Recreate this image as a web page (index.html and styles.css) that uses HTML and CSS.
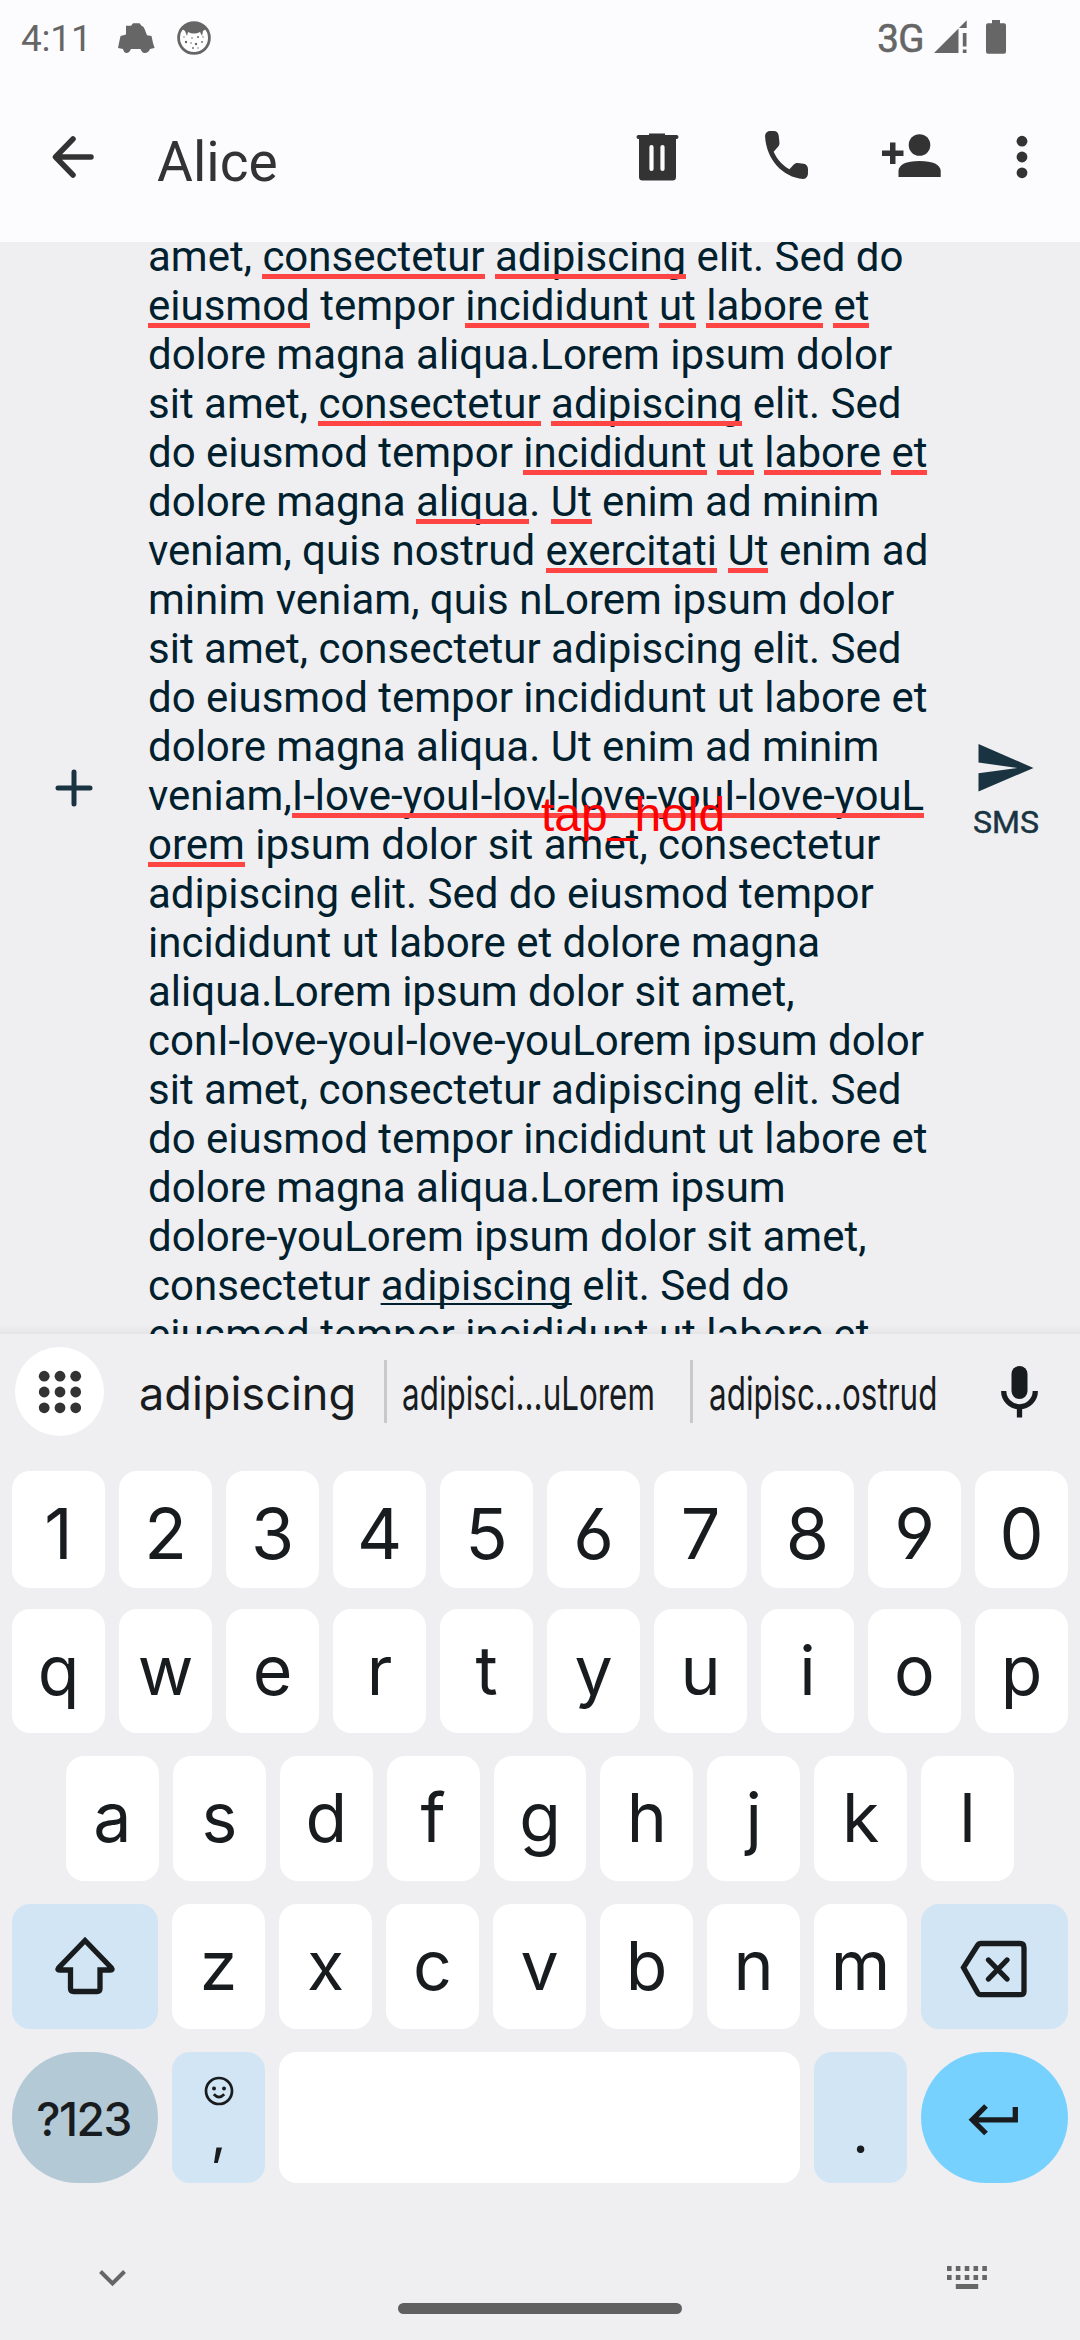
FILE: index.html
```html
<!DOCTYPE html>
<html lang="en">
<head>
<meta charset="utf-8">
<title>Alice</title>
<link rel="stylesheet" href="styles.css">
</head>
<body>
<div class="screen">
  <div class="status">
    <span class="clock">4:11</span>
    <svg class="car" width="37" height="32" viewBox="0 0 37 32"><path d="M8 3.7h5L15 1.2h6.500L23.500 3.700Q25.500 4 26.600 7L29 13.300L33.500 14L35 21L36.600 26L32 27Q30.500 31 26.600 31Q24 31 22.500 27H12.900Q11.500 31 8.400 31Q6 31 5 27L0 26L1 21L2.500 14L8 12.500Z"/></svg>
    <svg class="face" width="34" height="34" viewBox="0 0 34 34"><circle cx="17" cy="17" r="15.400"/><path d="M5 8Q10 1 17 1T29 8L26 10 25 15 23 11Q17 14 11 11L10 15 8 10Z"/><g><circle cx="9" cy="21" r="1.200"/><circle cx="15" cy="17" r=".8"/><circle cx="21" cy="16" r="1"/><circle cx="19" cy="23" r="1.200"/><circle cx="25" cy="21" r=".9"/><circle cx="14" cy="22" r=".8"/><circle cx="16" cy="27" r=".9"/><circle cx="7" cy="16" r=".7"/><circle cx="21" cy="27" r=".7"/><circle cx="26" cy="16" r=".7"/></g></svg>
    <span class="net">3G</span>
    <svg class="signal" width="33" height="34" viewBox="0 0 33 34"><path d="M0 33L24.500 8.500V33ZM32.700 .3V8H25ZM28.800 13H32.500V26.500H28.800ZM28.800 29.500H32.500V33H28.800Z"/></svg>
    <svg class="battery" width="20" height="34" viewBox="0 0 20 34"><path d="M6 0h8v3.300h4q2 0 2 2V31.700q0 2-2 2H2q-2 0-2-2V5.300q0-2 2-2h4Z"/></svg>
  </div>
  <header class="bar">
    <svg class="back" width="44" height="44" viewBox="0 0 44 44"><path d="M39 22H4M21 4L3.500 22L21 40"/></svg>
    <h1>Alice</h1>
    <svg class="trash" width="43" height="48" viewBox="0 0 43 48"><path d="M13 .5h16v1.500h11.500q2 0 2 2T40.500 6H40v38q0 3.500-3.500 3.500h-30Q3 47.500 3 44V6H2.500Q.5 6 .5 4T2.500 2H13Z"/><path class="slot" d="M15.500 14V36M26.500 14V36"/></svg>
    <svg class="phone" width="43" height="48" viewBox="3 3 18 18" preserveAspectRatio="none"><path d="M19.230 15.260l-2.540-.29c-.61-.07-1.210.14-1.640.57l-1.840 1.840c-2.830-1.440-5.150-3.750-6.590-6.590l1.850-1.850c.43-.43.64-1.030.57-1.640l-.29-2.520c-.12-1.010-.97-1.770-1.990-1.770H5.030c-1.130 0-2.070.94-2 2.070.53 8.540 7.360 15.360 15.890 15.890 1.130.07 2.070-.87 2.070-2v-1.730c.01-1.010-.75-1.860-1.760-1.980z"/></svg>
    <svg class="person" width="59" height="43" viewBox="0 0 59 43"><circle cx="37.500" cy="11" r="10.800"/><path d="M16.500 43V37Q17 27 37.500 27T58.700 37V43ZM8 8.500h5.500V16.500H21.500V22H13.500V30H8V22H0V16.500H8Z"/></svg>
    <svg class="more" width="12" height="44" viewBox="0 0 12 44"><circle cx="6" cy="6.200" r="5.400"/><circle cx="6" cy="22" r="5.400"/><circle cx="6" cy="37.800" r="5.400"/></svg>
  </header>
  <main class="compose">
    <div class="attach"><svg width="38" height="38" viewBox="0 0 38 38"><path d="M19 3V35M3 19H35"/></svg></div>
    <div class="message">
      <p>amet, <u>consectetur</u> <u>adipiscing</u> elit. Sed do</p>
      <p><u>eiusmod</u> tempor <u>incididunt</u> <u>ut</u> <u>labore</u> <u>et</u></p>
      <p>dolore magna aliqua.Lorem ipsum dolor</p>
      <p>sit amet, <u>consectetur</u> <u>adipiscing</u> elit. Sed</p>
      <p>do eiusmod tempor <u>incididunt</u> <u>ut</u> <u>labore</u> <u>et</u></p>
      <p>dolore magna <u>aliqua</u>. <u>Ut</u> enim ad minim</p>
      <p>veniam, quis nostrud <u>exercitati</u> <u>Ut</u> enim ad</p>
      <p>minim veniam, quis nLorem ipsum dolor</p>
      <p>sit amet, consectetur adipiscing elit. Sed</p>
      <p>do eiusmod tempor incididunt ut labore et</p>
      <p>dolore magna aliqua. Ut enim ad minim</p>
      <p>veniam,<u>I-love-youI-lovI-love-youI-love-youL</u></p>
      <p><u>orem</u> ipsum dolor sit amet, consectetur</p>
      <p>adipiscing elit. Sed do eiusmod tempor</p>
      <p>incididunt ut labore et dolore magna</p>
      <p>aliqua.Lorem ipsum dolor sit amet,</p>
      <p>conI-love-youI-love-youLorem ipsum dolor</p>
      <p>sit amet, consectetur adipiscing elit. Sed</p>
      <p>do eiusmod tempor incididunt ut labore et</p>
      <p>dolore magna aliqua.Lorem ipsum</p>
      <p>dolore-youLorem ipsum dolor sit amet,</p>
      <p>consectetur <span class="composing">adipiscing</span> elit. Sed do</p>
      <p>eiusmod tempor incididunt ut labore et</p>
    </div>
    <div class="send"><svg width="56" height="48" viewBox="0 0 56 48"><path d="M.5 0L55.500 24L.5 47.500V29.200L39.500 24L.5 18.500Z"/></svg><span>SMS</span></div>
    <div class="gesture">tap_hold</div>
  </main>
  <section class="keyboard">
    <div class="suggest">
      <div class="apps"><svg width="44" height="44" viewBox="0 0 44 44"><circle cx="6.200" cy="6.200" r="5.400"/><circle cx="22" cy="6.200" r="5.400"/><circle cx="37.700" cy="6.200" r="5.400"/><circle cx="6.200" cy="22" r="5.400"/><circle cx="22" cy="22" r="5.400"/><circle cx="37.700" cy="22" r="5.400"/><circle cx="6.200" cy="37.800" r="5.400"/><circle cx="22" cy="37.800" r="5.400"/><circle cx="37.700" cy="37.800" r="5.400"/></svg></div>
      <div class="word w1"><span>adipiscing</span></div>
      <div class="word w2"><span>adipisci...uLorem</span></div>
      <div class="word w3"><span>adipisc...ostrud</span></div>
      <svg class="mic" width="37" height="52" viewBox="0 0 37 52"><rect x="10.500" y="0" width="16" height="33" rx="8"/><path d="M2.700 25a15.800 15.800 0 0 0 31.600 0M18.500 40V51.500"/></svg>
    </div>
    <div class="row digits"><b>1</b><b>2</b><b>3</b><b>4</b><b>5</b><b>6</b><b>7</b><b>8</b><b>9</b><b>0</b></div>
    <div class="row top"><b>q</b><b>w</b><b>e</b><b>r</b><b>t</b><b>y</b><b>u</b><b>i</b><b>o</b><b>p</b></div>
    <div class="row home"><b>a</b><b>s</b><b>d</b><b>f</b><b>g</b><b>h</b><b>j</b><b>k</b><b>l</b></div>
    <div class="row low">
      <b class="fn"><svg width="146" height="125" viewBox="0 0 146 125"><path d="M73 36.500L46.500 64Q45 66 47.500 66H58.500V84.500Q58.500 87.500 61.500 87.500H85Q88 87.500 88 84.500V66H98.500Q101 66 99.500 64Z"/></svg></b>
      <b>z</b><b>x</b><b>c</b><b>v</b><b>b</b><b>n</b><b>m</b>
      <b class="fn"><svg width="147" height="125" viewBox="0 0 147 125"><path d="M42.500 65L56.500 43Q57.800 41 60 41H99Q103 41 103 45V89Q103 92.200 99 92.200H60Q57.800 92.200 56.500 90Z" transform="translate(0 -1.500)"/><path class="round" d="M67.500 56L86 75M86 56L67.500 75"/></svg></b>
    </div>
    <div class="row bottom">
      <b class="sym">?123</b>
      <b class="fn comma"><svg width="30" height="30" viewBox="0 0 30 30"><circle cx="15" cy="15" r="13"/><circle class="eye" cx="10" cy="12.400" r="2"/><circle class="eye" cx="20" cy="12.400" r="2"/><path d="M9.800 18.300Q15 23.800 20.200 18.300"/></svg><span>,</span></b>
      <b></b>
      <b class="fn period">.</b>
      <b class="enter"><svg width="147" height="131" viewBox="0 0 147 131"><path d="M94.300 55V67.800H52M65 54L51.300 67.800L65 81.500"/></svg></b>
    </div>
    <div class="nav">
      <svg class="hide" width="27" height="17" viewBox="0 0 27 17"><path d="M1.500 1.500L13.500 13.500L25.500 1.500"/></svg>
      <div class="handle"></div>
      <svg class="ime" width="41" height="24" viewBox="0 0 41 24"><path d="M0 0h4.600v5h-4.600zM8.800 0h4.600v5h-4.600zM17.700 0h4.600v5h-4.600zM26.500 0h4.600v5h-4.600zM35.300 0h4.600v5h-4.600zM0 9h4.600v5h-4.600zM8.800 9h4.600v5h-4.600zM17.700 9h4.600v5h-4.600zM26.500 9h4.600v5h-4.600zM35.300 9h4.600v5h-4.600zM8.800 18h22.400v5H8.800z"/></svg>
    </div>
  </section>
</div>
</body>
</html>
```
FILE: styles.css
```css
* { box-sizing: border-box; }
body { margin: 0; background: #efeff2; font-family: Roboto, sans-serif; }
svg { display: block; flex: none; }
.screen { width: 1080px; height: 2340px; display: flex; flex-direction: column; overflow: hidden; }

.status { height: 76px; background: #fcfcff; display: flex; align-items: flex-start; color: #666; fill: #666; padding: 0 74px 0 21px; }
.clock { font-size: 37px; line-height: 44px; margin-top: 17px; width: 97px; letter-spacing: -.2px; }
.car { margin-top: 22px; }
.face { margin: 21px 0 0 22px; }
.face > circle { fill: #fff; stroke: #666; stroke-width: 2.800; }
.net { margin: 16px 10px 0 auto; font-size: 38.500px; line-height: 45px; -webkit-text-stroke: .6px #666; letter-spacing: -.5px; }
.signal { margin-top: 20px; }
.battery { margin: 20px 0 0 19px; }

.bar { height: 166px; background: #fcfcff; display: flex; align-items: center; padding: 0 52px; color: #333; fill: #333; padding-bottom: 4px; }
.back { fill: none; stroke: #333; stroke-width: 5.500; stroke-linecap: round; stroke-linejoin: round; }
.bar h1 { margin: 9px 0 0 61px; width: 479px; font-size: 55px; font-weight: 400; line-height: 64px; }
.slot { fill: none; stroke: #fcfcff; stroke-width: 4.200; stroke-linecap: round; }
.phone { margin: -4px 0 0 86px; }
.person { margin: -3px 0 0 74px; }
.more { margin-left: 75px; }

.compose { position: relative; height: 1092px; display: flex; color: #00202e; }
.compose::after { content: ""; position: absolute; left: 0; right: 0; bottom: 0; height: 9px; background: linear-gradient(rgba(0,0,0,0), rgba(0,0,0,.045)); }
.attach { width: 148px; display: flex; align-items: center; padding-left: 55px; }
.attach svg { fill: none; stroke: #193341; stroke-width: 5; stroke-linecap: round; }
.message { width: 784px; overflow: hidden; }
.message p { margin: 0; height: 49px; font-size: 42px; line-height: 49px; white-space: nowrap; }
.message p:first-child { margin-top: -10px; }
.message u { position: relative; text-decoration: none; }
.message u::after { content: ""; position: absolute; left: 0; right: 0; top: 42px; height: 5.250px; background: #ff4444; }
.composing { text-decoration: underline 2px; text-underline-offset: 3px; text-decoration-skip-ink: none; }
.send { flex: 1; display: flex; flex-direction: column; align-items: center; justify-content: center; fill: #193341; color: #193341; padding-top: 8px; }
.send span { font-size: 32px; line-height: 38px; -webkit-text-stroke: .5px #193341; margin-top: 11px; }
.gesture { position: absolute; left: 541px; top: 545px; font: 48px/55px "Liberation Sans", sans-serif; color: #f00; }

.keyboard { flex: 1; display: flex; flex-direction: column; font-family: Inter, sans-serif; color: #191c1e; padding: 0 12px; }
.suggest { height: 115px; display: flex; align-items: center; font-size: 46px; padding-left: 3px; }
.apps { width: 89px; height: 89px; border-radius: 50%; background: #fff; display: flex; align-items: center; justify-content: center; fill: #333; }
.word { height: 63px; display: flex; align-items: center; white-space: nowrap; padding-top: 2px; }
.word span { transform-origin: 0 50%; width: 0; }
.w1 { width: 283px; padding-left: 35px; border-right: 3px solid #c8c9cb; }
.w2 { width: 306px; padding-left: 15px; border-right: 3px solid #c8c9cb; }
.w3 { width: 308px; padding-left: 16px; }
.w1 span { transform: scaleX(.98); }
.w2 span, .w3 span { transform: scaleX(.683); }
.mic { fill: #191c1e; }
.mic path { fill: none; stroke: #191c1e; stroke-width: 5.300; }

.row { display: flex; gap: 14px; font-size: 68px; line-height: 80px; }
.row b { flex: 1; font-weight: 400; background: #fff; border-radius: 18px; display: flex; align-items: center; justify-content: center; padding-bottom: 3px; }
.row .fn { background: #d2e5f4; padding: 0; }
.digits { height: 117px; margin-top: 22px; font-size: 70px; font-feature-settings: "cv03", "cv04"; }
.digits b { padding: 8px 0 0; }
.top { height: 124px; margin-top: 21px; }
.home { height: 125px; margin-top: 23px; padding: 0 54px; }
.low { height: 125px; margin-top: 23px; }
.low b, .bottom b { flex: 0 0 93px; }
.low .fn:first-child, .bottom .sym { flex-basis: 146px; }
.low .fn:last-child, .bottom .enter { flex-basis: 147px; }
.low svg { fill: none; stroke: #191c1e; stroke-width: 5.300; }
.low .round { stroke-linecap: round; }
.bottom { height: 131px; margin-top: 23px; }
.bottom b:nth-child(3) { flex: 1; }
.bottom .sym { background: #b4c9d6; border-radius: 66px; font-size: 46px; font-weight: 500; letter-spacing: -1.500px; padding: 2px 3px 0 0; }
.bottom .comma { flex-direction: column; justify-content: flex-start; padding-top: 24px; font-size: 56px; line-height: 60px; }
.comma svg { fill: none; stroke: #191c1e; stroke-width: 2.700; }
.comma .eye { fill: #191c1e; stroke: none; }
.comma span { margin-top: -3px; }
.bottom .period { font: 60px/60px Lato, sans-serif; padding-top: 24px; }
.bottom .enter { background: #77d1ff; border-radius: 66px; padding: 0; }
.enter svg { fill: none; stroke: #191c1e; stroke-width: 5.300; }

.nav { display: flex; align-items: flex-start; padding-left: 87px; }
.hide { margin-top: 87px; fill: none; stroke: #666; stroke-width: 4; }
.handle { width: 284px; height: 11px; border-radius: 6px; background: #606060; margin: 120px 0 0 272px; }
.ime { fill: #666; margin: 83px 0 0 265px; }
```
